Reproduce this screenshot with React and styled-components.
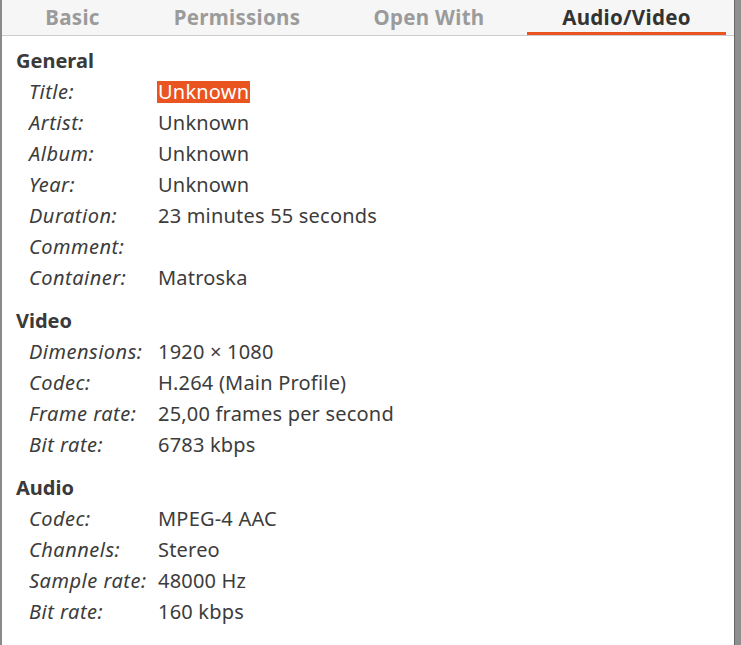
import React from "react";
import styled, { createGlobalStyle } from "styled-components";

const Global = createGlobalStyle`
  html, body { margin: 0; padding: 0; background: #8e8e8e; overflow: hidden; }
  body { font-family: "Noto Sans", "DejaVu Sans", sans-serif; }
`;

const Frame = styled.div`
  width: 741px;
  height: 645px;
  display: flex;
  overflow: hidden;
  background: #8e8e8e;
`;

const LeftEdge = styled.div`
  width: 2px;
  background: #8a8a8a;
  flex: none;
`;

const RightEdge = styled.div`
  width: 7px;
  flex: none;
  border-left: 1px solid #666666;
  box-sizing: border-box;
  background-color: #8f8f8f;
`;

const Panel = styled.div`
  width: 732px;
  flex: none;
  display: flex;
  flex-direction: column;
  background: #ffffff;
`;

const TabBar = styled.div`
  height: 35px;
  display: flex;
  background: #f6f6f6;
  border-bottom: 1px solid #cdcdcd;
  flex: none;
`;

const Tab = styled.div`
  width: ${(p) => p.$w}px;
  flex: none;
  display: flex;
  align-items: center;
  justify-content: center;
  font-weight: 700;
  font-size: 20.5px;
  letter-spacing: 0.3px;
  color: ${(p) => (p.$active ? "#333333" : "#9b9b9b")};
  box-shadow: ${(p) => (p.$active ? "inset 0 -3px 0 #e95420" : "none")};
  padding-bottom: 2px;
  box-sizing: border-box;
`;

const Content = styled.div`
  padding: 9px 0 0 14px;
  display: flex;
  flex-direction: column;
`;

const Section = styled.section`
  display: flex;
  flex-direction: column;
  margin-bottom: 12px;
`;

const Heading = styled.div`
  height: 31px;
  display: flex;
  align-items: center;
  font-weight: 700;
  font-size: 20px;
  color: #3a3a3a;
`;

const Row = styled.div`
  display: grid;
  grid-template-columns: 128px auto;
  height: 31px;
  align-items: center;
  padding-left: 13px;
  font-size: 20px;
  color: #3c3c3c;
`;

const Label = styled.span`
  font-style: italic;
  letter-spacing: 0.5px;
  white-space: nowrap;
`;

const Value = styled.span`
  justify-self: start;
  padding: 0 1px;
  letter-spacing: 0.2px;
  white-space: nowrap;
  ${(p) =>
    p.$selected &&
    `background: #e95420; color: #ffffff; line-height: 22px;`}
`;

const tabs = [
  { name: "Basic", w: 141 },
  { name: "Permissions", w: 188 },
  { name: "Open With", w: 196 },
  { name: "Audio/Video", w: 199, active: true },
];

const sections = [
  {
    title: "General",
    rows: [
      ["Title:", "Unknown", true],
      ["Artist:", "Unknown"],
      ["Album:", "Unknown"],
      ["Year:", "Unknown"],
      ["Duration:", "23 minutes 55 seconds"],
      ["Comment:", ""],
      ["Container:", "Matroska"],
    ],
  },
  {
    title: "Video",
    rows: [
      ["Dimensions:", "1920 × 1080"],
      ["Codec:", "H.264 (Main Profile)"],
      ["Frame rate:", "25,00 frames per second"],
      ["Bit rate:", "6783 kbps"],
    ],
  },
  {
    title: "Audio",
    rows: [
      ["Codec:", "MPEG-4 AAC"],
      ["Channels:", "Stereo"],
      ["Sample rate:", "48000 Hz"],
      ["Bit rate:", "160 kbps"],
    ],
  },
];

export default function App() {
  return (
    <>
      <Global />
      <Frame>
        <LeftEdge />
        <Panel>
          <TabBar>
            {tabs.map((t) => (
              <Tab key={t.name} $w={t.w} $active={t.active}>
                {t.name}
              </Tab>
            ))}
          </TabBar>
          <Content>
            {sections.map((s) => (
              <Section key={s.title}>
                <Heading>{s.title}</Heading>
                {s.rows.map(([l, v, sel]) => (
                  <Row key={l}>
                    <Label>{l}</Label>
                    <Value $selected={sel}>{v}</Value>
                  </Row>
                ))}
              </Section>
            ))}
          </Content>
        </Panel>
        <RightEdge />
      </Frame>
    </>
  );
}
